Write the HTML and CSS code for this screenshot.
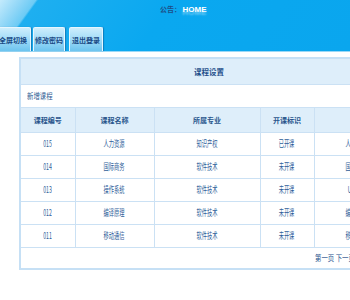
FILE: index.html
```html
<!DOCTYPE html>
<html>
<head>
    <title>课程设置</title>
    <link rel="stylesheet" href="styles.css">
</head>
<body>
    <div class="testata">
        <div class="avviso">公告： <span class="home">HOME</span></div>
        <div class="schede">
            <a class="scheda prima">全屏切换</a>
            <a class="scheda seconda">修改密码</a>
            <a class="scheda terza">退出登录</a>
        </div>
    </div>
    <div class="contenuto">
        <table class="tabella">
            <colgroup>
                <col class="c1">
                <col class="c2">
                <col class="c3">
                <col class="c4">
                <col class="c5">
            </colgroup>
            <tr class="titolo">
                <td colspan="5">课程设置</td>
            </tr>
            <tr class="azioni">
                <td colspan="5"><span class="t">新增课程</span></td>
            </tr>
            <tr class="intestazione">
                <td>课程编号</td>
                <td>课程名称</td>
                <td>所属专业</td>
                <td>开课标识</td>
                <td></td>
            </tr>
            <tr><td><span class="t">015</span></td><td><span class="t">人力资源</span></td><td><span class="t">知识产权</span></td><td><span class="t">已开课</span></td><td><span class="t">人力资源</span></td></tr>
            <tr><td><span class="t">014</span></td><td><span class="t">国际商务</span></td><td><span class="t">软件技术</span></td><td><span class="t">未开课</span></td><td><span class="t">国际商务</span></td></tr>
            <tr><td><span class="t">013</span></td><td><span class="t">操作系统</span></td><td><span class="t">软件技术</span></td><td><span class="t">未开课</span></td><td><span class="t">UI设计</span></td></tr>
            <tr><td><span class="t">012</span></td><td><span class="t">编译原理</span></td><td><span class="t">软件技术</span></td><td><span class="t">未开课</span></td><td><span class="t">编译原理</span></td></tr>
            <tr><td><span class="t">011</span></td><td><span class="t">移动通信</span></td><td><span class="t">软件技术</span></td><td><span class="t">未开课</span></td><td><span class="t">移动通信</span></td></tr>
            <tr class="piede">
                <td colspan="5"><span class="t pagine">第一页 下一页 上一页 最后页</span></td>
            </tr>
        </table>
    </div>
</body>
</html>
```
FILE: styles.css
```css
* {
    box-sizing: border-box;
}
body {
    margin: 0;
    background-color: #ffffff;
    font-family: "Noto Sans CJK SC", "DejaVu Sans", sans-serif;
    font-size: 9px;
    color: #2d5d99;
    overflow: hidden;
}
.testata {
    height: 52px;
    background: linear-gradient(126deg, #c4ebfc 0, #8fd6f7 18px, #6ccbf5 29px, #1eaff0 31px, #0aa8f0 45%, #0aa6ee 100%);
    border-bottom: 1px solid #9ad8f6;
    display: flex;
    flex-direction: column;
}
.avviso {
    height: 27px;
    padding-left: 160px;
    padding-top: 3px;
    color: #1e4f88;
    font-weight: bold;
    font-size: 7px;
    line-height: 12px;
}
.home {
    color: #ffffff;
    font-family: "Liberation Sans", sans-serif;
    font-size: 8px;
    text-shadow: 0 3px 2px rgba(255, 255, 255, 0.45);
}
.schede {
    display: flex;
    height: 24px;
    margin-left: -4px;
}
.scheda {
    display: flex;
    align-items: center;
    justify-content: center;
    height: 24px;
    white-space: nowrap;
    background: linear-gradient(to bottom, #cdeefd 0, #a6ddf8 45%, #6cc4ef 100%);
    border: 1px solid #e6f6fe;
    border-bottom: none;
    border-radius: 2px 2px 0 0;
    color: #1a4a85;
    font-weight: bold;
    font-size: 7px;
    box-shadow: 1px 0 1px rgba(0, 60, 120, 0.4);
}
.scheda.prima {
    width: 35px;
    justify-content: flex-end;
    padding-right: 3px;
}
.scheda.seconda {
    width: 32px;
    margin-left: 2px;
}
.scheda.terza {
    width: 34px;
    margin-left: 4px;
}
.contenuto {
    padding: 5px 0 0 19px;
}
.tabella {
    width: 380px;
    border-collapse: collapse;
    border: 2px solid #c6e0f5;
    table-layout: fixed;
}
.c1 { width: 55px; }
.c2 { width: 79px; }
.c3 { width: 106px; }
.c4 { width: 54px; }
.tabella td {
    border: 1px solid #cbe1f4;
    text-align: center;
    height: 23px;
    padding: 0;
    white-space: nowrap;
    overflow: hidden;
}
.t {
    display: inline-block;
    transform: scaleX(0.58);
}
.titolo td {
    height: 26px;
    background-color: #deeefa;
    font-weight: bold;
    font-size: 7.5px;
    color: #1f4f8a;
}
.azioni td {
    text-align: left;
    padding-left: 0;
    color: #2b5a92;
}
.azioni .t {
    font-size: 8px;
    transform: scaleX(0.8);
    transform-origin: left center;
    margin-left: 6px;
}
.intestazione td {
    height: 25px;
    background-color: #deeefa;
    font-weight: bold;
    font-size: 7px;
    color: #29558c;
}
.piede td {
    height: 22px;
    text-align: left;
    padding-left: 282px;
    color: #25528c;
}
.piede .t {
    font-size: 8px;
    transform: scaleX(0.8);
    transform-origin: left center;
    margin-left: 12px;
}
```
